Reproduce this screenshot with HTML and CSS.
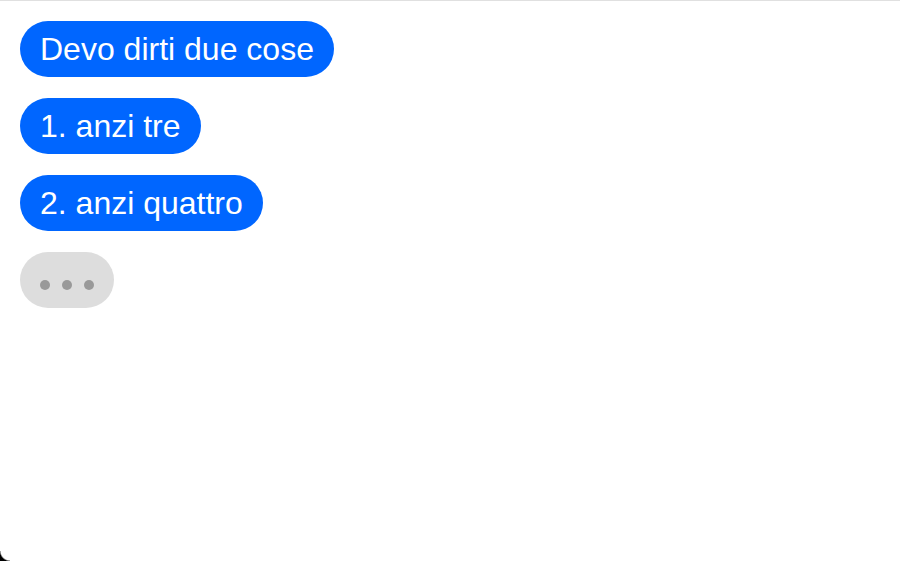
FILE: index.html
```html
<!DOCTYPE html>
<html>
<head>
<meta charset="utf-8">
<link rel="stylesheet" href="styles.css">
</head>
<body>
<div class="chat">
  <div class="bubble">Devo dirti due cose</div>
  <div class="bubble">1. anzi tre</div>
  <div class="bubble">2. anzi quattro</div>
  <div class="typing"><span class="dot"></span><span class="dot"></span><span class="dot"></span></div>
</div>
<div class="corner"></div>
</body>
</html>
```
FILE: styles.css
```css
html, body {
  margin: 0;
  padding: 0;
  background: #ffffff;
  height: 100%;
}
body {
  border-top: 1px solid #e0e0e0;
  box-sizing: border-box;
  font-family: "Liberation Sans", Arial, sans-serif;
}
.chat {
  display: flex;
  flex-direction: column;
  align-items: flex-start;
  gap: 21px;
  padding: 20px;
}
.bubble {
  background: #0066ff;
  color: #ffffff;
  font-size: 32px;
  line-height: 36px;
  padding: 10px 20px;
  border-radius: 28px;
  white-space: nowrap;
}
.typing {
  background: #dddddd;
  height: 56px;
  border-radius: 28px;
  padding: 0 20px;
  box-sizing: border-box;
  display: flex;
  align-items: center;
  gap: 12px;
}
.dot {
  width: 10px;
  height: 10px;
  border-radius: 50%;
  background: #999999;
  margin-top: 9px;
}
.corner {
  position: fixed;
  left: 0;
  bottom: 0;
  width: 10px;
  height: 10px;
  background: radial-gradient(circle at 100% 0, rgba(0,0,0,0) 9px, #000 10.5px);
}
```
